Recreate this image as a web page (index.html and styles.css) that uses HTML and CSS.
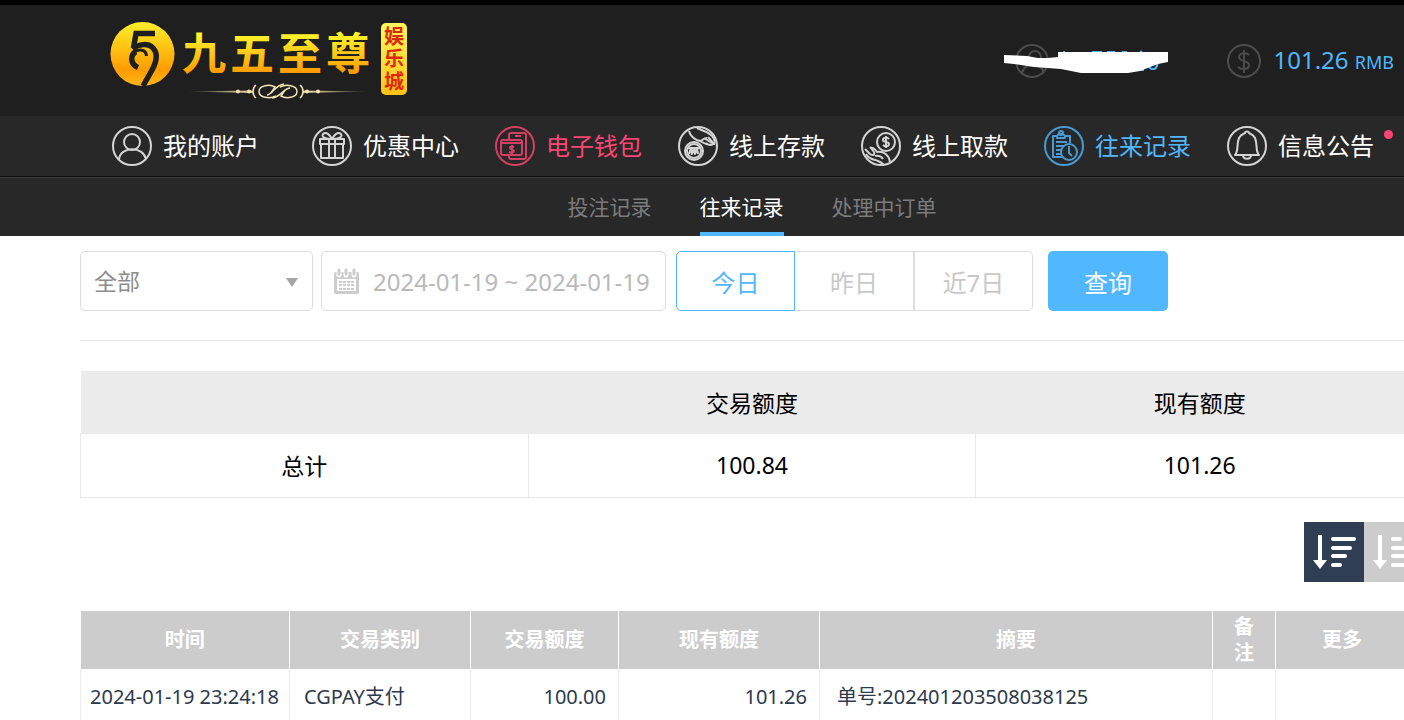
FILE: index.html
```html
<!DOCTYPE html>
<html lang="zh-CN">
<head>
    <meta charset="UTF-8">
    <meta name="viewport" content="width=device-width, initial-scale=1.0">
    <title>往来记录</title>
    <link rel="stylesheet" href="styles.css">
</head>
<body>
    <header class="header">
        <a class="logo" href="#">
            <svg width="300" height="80" viewBox="0 0 300 80">
                <defs>
                    <linearGradient id="gold" x1="0" y1="0" x2="0" y2="1">
                        <stop offset="0" stop-color="#fff02a"/>
                        <stop offset="0.75" stop-color="#ff9c00"/>
                        <stop offset="1" stop-color="#ffb81a"/>
                    </linearGradient>
                    <linearGradient id="goldText" gradientUnits="userSpaceOnUse" x1="0" y1="14" x2="0" y2="54">
                        <stop offset="0" stop-color="#fff32a"/>
                        <stop offset="1" stop-color="#ff9600"/>
                    </linearGradient>
                    <linearGradient id="seal" x1="0" y1="0" x2="0" y2="1">
                        <stop offset="0" stop-color="#fff85c"/>
                        <stop offset="1" stop-color="#ffc414"/>
                    </linearGradient>
                    <linearGradient id="rule" x1="0" y1="0" x2="1" y2="0">
                        <stop offset="0" stop-color="#e8d9a0" stop-opacity="0"/>
                        <stop offset="0.35" stop-color="#e8d9a0"/>
                        <stop offset="0.65" stop-color="#e8d9a0"/>
                        <stop offset="1" stop-color="#e8d9a0" stop-opacity="0"/>
                    </linearGradient>
                </defs>
                <circle cx="32.500" cy="33" r="32" fill="url(#gold)"/>
                <path d="M45 12.500H26L23.500 27" fill="none" stroke="#1f1f1f" stroke-width="5.500"/>
                <path d="M22.500 28C29 22.500 38 22.500 42 26C49 32 46 42 41.500 50L33 65" fill="none" stroke="#1f1f1f" stroke-width="5.500"/>
                <path d="M28 46.500C20 43 20 34 26 30.500" fill="none" stroke="#1f1f1f" stroke-width="5.500"/>
                <path d="M24 31C29 28 36 28 36.500 35" fill="none" stroke="#1f1f1f" stroke-width="3"/>
                <text class="logo-name" x="72 120 168 216" y="49" fill="url(#goldText)">九五至尊</text>
                <path d="M74 70.500L150 69.500H188L262 70.500L188 72H150Z" fill="url(#rule)"/>
                <rect x="143" y="66" width="50" height="9" fill="#1f1f1f"/>
                <g fill="none" stroke="#f2e5b0" stroke-width="1.500">
                    <path d="M166 75C160 78 149 77 149 70.500C149 64 160 63 165 66L161 72"/>
                    <path d="M170 66C176 63 187 64 187 70.500C187 77 176 78 171 75L175 69"/>
                    <path d="M157 74C162 74 165 64 174 63M162 77C171 76 174 67 180 67"/>
                    <path d="M146 64C142 67 142 74 146 77M190 64C194 67 194 74 190 77"/>
                </g>
                <g fill="#f2e5b0">
                    <circle cx="139" cy="70.500" r="2"/><circle cx="128" cy="70.500" r="2"/>
                    <circle cx="197" cy="70.500" r="2"/><circle cx="208" cy="70.500" r="2"/>
                </g>
                <rect x="271" y="2" width="26" height="72" rx="5" fill="url(#seal)"/>
                <g class="logo-seal">
                    <text x="284" y="23">娱</text>
                    <text x="284" y="45">乐</text>
                    <text x="284" y="68">城</text>
                </g>
            </svg>
        </a>
        <div class="account">
            <svg class="account-name" width="166" height="36" viewBox="0 0 166 36">
                <g fill="none" stroke="#4c4c4c" stroke-width="2">
                    <circle cx="28" cy="18" r="16"/>
                    <circle cx="31" cy="14" r="6"/>
                    <path d="M18 30C20 19 38 19 40 30"/>
                </g>
                <path d="M60 8V12M88 9H98M103 9H111M118 9H123M134 11L138 8M136 27H140" stroke="#51b7ff" stroke-width="2"/>
                <text class="account-text" x="142" y="27">0</text>
                <path d="M0 12L23 13L34 15L44 15L54 14V9H164V19L154 21L136 28L124 30H77L57 26L30 24L10 21L0 20Z" fill="#fff"/>
            </svg>
            <div class="balance">
                <svg width="34" height="34" viewBox="0 0 34 34" fill="none" stroke="#4c4c4c" stroke-width="2">
                    <circle cx="17" cy="17" r="16"/>
                    <path d="M17 6V29M22 11C19 8 12 9 12 13C12 18 22 16 22 21C22 26 14 26 11 23"/>
                </svg>
                <span class="amount">101.26 <small>RMB</small></span>
            </div>
        </div>
    </header>

    <nav class="main-nav">
        <a class="nav-item nav-first" href="#">
            <svg class="nav-icon" viewBox="0 0 40 40">
                <circle cx="20" cy="20" r="19"/>
                <circle cx="20" cy="16" r="8"/>
                <path d="M7 33C9 20 31 20 34 33"/>
            </svg>
            我的账户
        </a>
        <a class="nav-item" href="#">
            <svg class="nav-icon" viewBox="0 0 40 40">
                <circle cx="20" cy="20" r="19"/>
                <path d="M8 13H32V18H8ZM9 18V32H31V18M17 13V32M23 13V32M20 13C13 13 9 11 11 8C14 5 18 9 20 13C22 9 26 5 29 8C31 11 27 13 20 13"/>
            </svg>
            优惠中心
        </a>
        <a class="nav-item nav-wallet" href="#">
            <svg class="nav-icon" viewBox="0 0 40 40">
                <circle cx="20" cy="20" r="19"/>
                <path d="M14 14V9C14 8 15 7 16 7H29C30 7 31 8 31 9V31C31 32 30 33 29 33H16C15 33 14 32 14 31V29M20 10H26"/>
                <rect x="6" y="14" width="21" height="15" rx="2"/>
                <path d="M6 17H27M19 21C17 20 15 20 15 22C15 24 19 23 19 25C19 27 16 27 14 26M17 19V28"/>
            </svg>
            电子钱包
        </a>
        <a class="nav-item" href="#">
            <svg class="nav-icon" viewBox="0 0 40 40">
                <circle cx="20" cy="20" r="19"/>
                <circle cx="16" cy="25" r="9"/>
                <circle cx="16" cy="25" r="7"/>
                <path d="M11 28L13 22L14 28L16 22L17 28L19 22L20 28M10 22H22M11 5C12 10 17 14 22 15C27 18 33 20 35 18C35 15 31 13 30 11M19 2C25 5 31 6 34 10C37 13 37 16 36 19M22 15C25 14 26 12 29 12M28 17L31 19M26 12L34 17"/>
            </svg>
            线上存款
        </a>
        <a class="nav-item" href="#">
            <svg class="nav-icon" viewBox="0 0 40 40">
                <circle cx="20" cy="20" r="19"/>
                <circle cx="25" cy="16" r="9"/>
                <path d="M28 13C26 11 22 11 22 14C22 17 28 15 28 18C28 21 24 21 22 19M25 10V22M4 23L9 28C12 30 14 29 13 26L9 21M9 22C12 21 14 23 16 26C23 25 28 29 29 36M5 28C8 34 13 33 17 35C20 36 21 37 23 39M14 30C18 29 21 31 22 33"/>
            </svg>
            线上取款
        </a>
        <a class="nav-item nav-current" href="#">
            <svg class="nav-icon" viewBox="0 0 40 40">
                <circle cx="20" cy="20" r="19"/>
                <path d="M19 31H9V10H14M20 10H26V17M13 10V12H21V10L19 8H15ZM12 16H23M12 20H20M12 24H17M12 28H17"/>
                <circle cx="17" cy="7" r="2"/>
                <circle cx="25" cy="26" r="8"/>
                <path d="M25 20V27L28 30"/>
            </svg>
            往来记录
        </a>
        <a class="nav-item nav-notice" href="#">
            <svg class="nav-icon" viewBox="0 0 40 40">
                <circle cx="20" cy="20" r="19"/>
                <path d="M8 29C12 25 9 19 12 12C14 8 17 8 18 7C18 5 22 5 22 7C23 8 26 8 28 12C31 19 28 25 32 29ZM16 29C16 34 24 34 24 29"/>
            </svg>
            信息公告
            <span class="dot"></span>
        </a>
    </nav>

    <nav class="sub-nav">
        <a href="#">投注记录</a>
        <a class="active" href="#">往来记录</a>
        <a href="#">处理中订单</a>
    </nav>

    <main class="content">
        <form class="filters">
            <div class="type-field">
                <select aria-label="交易类别">
                    <option>全部</option>
                </select>
            </div>
            <label class="date-field">
                <svg width="25" height="26" viewBox="0 0 25 26">
                    <path d="M2 4H23Q25 4 25 6V24Q25 26 23 26H2Q0 26 0 24V6Q0 4 2 4Z" fill="#ccc"/>
                    <path d="M3 11H22V23H3Z" fill="#fff"/>
                    <g stroke="#fff" stroke-width="5" stroke-linecap="round"><path d="M5 3V7M12 3V7M20 3V7"/></g>
                    <g stroke="#ccc" stroke-width="3" stroke-linecap="round"><path d="M5 2V6M12 2V6M20 2V6"/></g>
                    <path d="M5 14H20M5 17H20M5 21H20" stroke="#ccc" stroke-width="2" stroke-dasharray="3 1"/>
                </svg>
                <input type="text" aria-label="日期" value="2024-01-19 ~ 2024-01-19">
            </label>
            <div class="day-group">
                <button type="button" class="selected">今日</button>
                <button type="button">昨日</button>
                <button type="button">近7日</button>
            </div>
            <button type="submit" class="btn-search">查询</button>
        </form>

        <table class="summary">
            <thead>
                <tr><th></th><th>交易额度</th><th>现有额度</th></tr>
            </thead>
            <tbody>
                <tr><td>总计</td><td>100.84</td><td>101.26</td></tr>
            </tbody>
        </table>

        <div class="sort">
            <button type="button" class="selected" aria-label="降序">
                <svg width="60" height="60" viewBox="0 0 60 60">
                    <path d="M14 13H18V38H23L16 47L9 38H14Z" fill="#fff"/>
                    <path d="M29 17H50M29 26H46M29 34H41M29 43H36" stroke="#fff" stroke-width="4" stroke-linecap="round"/>
                </svg>
            </button>
            <button type="button" aria-label="升序">
                <svg width="60" height="60" viewBox="0 0 60 60">
                    <path d="M14 13H18V38H23L16 47L9 38H14Z" fill="#fff"/>
                    <path d="M29 17H36M29 26H41M29 34H46M29 43H50" stroke="#fff" stroke-width="4" stroke-linecap="round"/>
                </svg>
            </button>
        </div>

        <table class="records">
            <colgroup>
                <col class="col-time">
                <col class="col-type">
                <col class="col-amount">
                <col class="col-balance">
                <col>
                <col class="col-note">
                <col class="col-more">
            </colgroup>
            <thead>
                <tr>
                    <th>时间</th>
                    <th>交易类别</th>
                    <th>交易额度</th>
                    <th>现有额度</th>
                    <th>摘要</th>
                    <th class="note">备注</th>
                    <th>更多</th>
                </tr>
            </thead>
            <tbody>
                <tr>
                    <td class="time">2024-01-19 23:24:18</td>
                    <td class="type">CGPAY支付</td>
                    <td class="number">100.00</td>
                    <td class="number">101.26</td>
                    <td class="remark">单号:202401203508038125</td>
                    <td></td>
                    <td></td>
                </tr>
            </tbody>
        </table>
    </main>
</body>
</html>
```

FILE: styles.css
```css
* {
    box-sizing: border-box;
}
html {
    overflow: hidden;
}
body {
    margin: 0;
    font-family: "Noto Sans", "Noto Sans CJK SC", sans-serif;
    background-color: #fff;
    color: #000;
}
a {
    color: inherit;
    text-decoration: none;
}
button, input, select {
    font-family: inherit;
    margin: 0;
}
svg {
    display: block;
    flex: none;
}

/* 顶部 */
.header {
    display: flex;
    justify-content: space-between;
    height: 116px;
    padding: 16px 10px 0 110px;
    border-top: 5px solid #000;
    background-color: #1f1f1f;
}
.logo-name {
    font-family: "Noto Sans CJK SC", sans-serif;
    font-size: 44px;
    font-weight: bold;
}
.logo-seal {
    font-family: "Noto Sans CJK SC", sans-serif;
    font-size: 20px;
    font-weight: bold;
    fill: #d92b0c;
    text-anchor: middle;
}
.account {
    display: flex;
    align-items: center;
    gap: 57px;
    height: 40px;
    margin-top: 20px;
}
.account-text {
    font-size: 24px;
    fill: #51b7ff;
}
.balance {
    display: flex;
    align-items: center;
    gap: 12px;
    color: #51b7ff;
}
.amount {
    font-size: 24px;
    line-height: 36px;
    white-space: nowrap;
}
.amount small {
    font-size: 18px;
}

/* 主导航 */
.main-nav {
    display: flex;
    gap: 36px;
    height: 61px;
    padding-left: 112px;
    background-color: #282828;
    border-bottom: 1px solid #111;
    overflow: hidden;
}
.nav-item {
    position: relative;
    display: flex;
    flex: none;
    align-items: center;
    gap: 11px;
    color: #fff;
    font-size: 24px;
    line-height: 36px;
    white-space: nowrap;
}
.nav-first {
    margin-right: 17px;
}
.nav-icon {
    width: 40px;
    height: 40px;
    fill: none;
    stroke: currentColor;
    stroke-width: 2;
    stroke-linejoin: round;
    opacity: 0.8;
}
.nav-wallet {
    color: #ff4573;
}
.nav-current {
    color: #51b7ff;
}
.dot {
    position: absolute;
    top: 14px;
    right: -19px;
    width: 9px;
    height: 9px;
    border-radius: 50%;
    background-color: #ff4573;
}
.sub-nav {
    display: flex;
    justify-content: center;
    gap: 48px;
    height: 59px;
    margin-right: -20px;
    padding-left: 80px;
    border-top: 1px solid #3a3a3a;
    background-color: #282828;
    color: #7c7c7c;
    font-size: 21px;
    line-height: 58px;
}
.sub-nav .active {
    color: #fff;
    border-bottom: 4px solid #51b7ff;
}

/* 内容 */
.content {
    margin: 0 -20px 0 80px;
}
.filters {
    display: flex;
    height: 105px;
    padding-top: 15px;
    border-bottom: 1px solid #e9e9e9;
}
.type-field {
    position: relative;
    width: 233px;
    height: 60px;
    margin-right: 8px;
}
.type-field select {
    appearance: none;
    width: 100%;
    height: 60px;
    padding: 0 13px;
    border: 1px solid #ddd;
    border-radius: 5px;
    background-color: #fff;
    color: #8c8c8c;
    font-size: 23px;
}
.type-field::after {
    content: "";
    position: absolute;
    top: 27px;
    right: 15px;
    border: 6px solid transparent;
    border-top: 9px solid #a5a5a5;
    border-bottom: 0;
    pointer-events: none;
}
.date-field {
    display: flex;
    align-items: center;
    gap: 14px;
    width: 345px;
    height: 60px;
    margin-right: 10px;
    padding-left: 12px;
    border: 1px solid #ddd;
    border-radius: 5px;
}
.date-field input {
    flex: 1;
    min-width: 0;
    padding: 0;
    border: 0;
    outline: 0;
    background: none;
    color: #b9b9b9;
    font-size: 24px;
}
.day-group {
    display: flex;
    height: 60px;
    margin-right: 15px;
}
.day-group button {
    width: 119px;
    padding: 0;
    border: 1px solid #ddd;
    border-left-width: 0;
    background-color: #fff;
    color: #c8c8c8;
    font-size: 24px;
}
.day-group button:first-child {
    border-radius: 5px 0 0 5px;
}
.day-group button:last-child {
    border-left-width: 1px;
    border-radius: 0 5px 5px 0;
}
.day-group .selected {
    border: 1px solid #51b7ff;
    color: #51b7ff;
}
.btn-search {
    width: 120px;
    height: 60px;
    border: 0;
    border-radius: 5px;
    background-color: #51b7ff;
    color: #fff;
    font-size: 24px;
}
table {
    border-collapse: collapse;
    table-layout: fixed;
}
.summary {
    width: 100%;
    margin-top: 30px;
    font-size: 23px;
    text-align: center;
}
.summary th {
    height: 62px;
    padding: 0;
    background-color: #ebebeb;
    font-weight: normal;
}
.summary td {
    height: 64px;
    padding: 0;
    border: 1px solid #e9e9e9;
}
.sort {
    display: flex;
    justify-content: flex-end;
    margin: 24px 0 29px;
}
.sort button {
    padding: 0;
    border: 0;
    background-color: #ccc;
}
.sort .selected {
    background-color: #2f3e52;
}
.records {
    width: calc(100% - 15px);
    color: #2c3a4c;
    font-size: 20px;
    line-height: 26px;
}
.col-time {
    width: 209px;
}
.col-type {
    width: 181px;
}
.col-amount {
    width: 148px;
}
.col-balance {
    width: 201px;
}
.col-note {
    width: 63px;
}
.col-more {
    width: 133px;
}
.records th {
    height: 58px;
    padding: 0;
    border-right: 1px solid #fff;
    background-color: #ccc;
    color: #fff;
}
.records .note {
    padding: 0 20px;
}
.records td {
    height: 57px;
    padding: 0;
    border: 1px solid #ececec;
    border-top: 0;
    white-space: nowrap;
}
.records .time {
    padding-left: 9px;
}
.records .type {
    padding-left: 14px;
}
.records .number {
    padding-right: 12px;
    text-align: right;
}
.records .remark {
    padding-left: 17px;
}
```
